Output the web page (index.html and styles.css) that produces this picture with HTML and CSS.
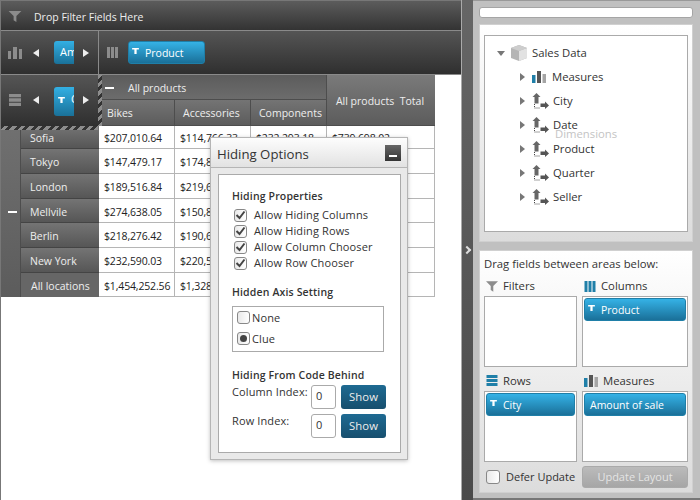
FILE: index.html
```html
<!DOCTYPE html>
<html>
<head>
    <meta charset="utf-8" />
    <title>Hiding Options</title>
    <link rel="stylesheet" href="styles.css">
</head>
<body>
<svg class="defs" width="0" height="0">
    <symbol id="funnel" viewBox="0 0 14 12"><path d="M0 0H14L8.500 5.500V12L5.500 10V5.500Z"/></symbol>
    <symbol id="mini-funnel" viewBox="0 0 9 8"><path d="M0 0H9V2H6V8H3V2H0Z"/></symbol>
    <symbol id="dim" viewBox="0 0 17 16">
        <path d="M4.500 0L8.500 4H6.500V10.500H2.500V4H.5Z" fill="#666"/>
        <path d="M8.500 10.500H13V8.500L17 12.500L13 16V14H8.500Z" fill="#555"/>
        <path d="M2.500 11v4h6" fill="none" stroke="#444" stroke-dasharray="1 1"/>
    </symbol>
</svg>
<div class="app">
    <div class="pivot">
        <div class="filter-bar">
            <svg class="bar-icon"><use href="#funnel"/></svg>
            <span>Drop Filter Fields Here</span>
        </div>
        <div class="axes-row">
            <div class="corner">
                <svg class="zone-icon" viewBox="0 0 14 12"><path d="M0 4h3v8H0zM5 0h4v12H5zM11 2h3v10h-3z" fill="#8c8c8c"/></svg>
                <span class="arrow left"></span>
                <span class="clip-btn short">Am</span>
                <span class="arrow right"></span>
            </div>
            <div class="col-zone">
                <svg class="zone-icon" viewBox="0 0 11 11"><path d="M0 0h3v11H0zM4 0h3v11H4zM8 0h3v11H8z" fill="#8c8c8c"/></svg>
                <span class="field-btn dark-btn"><svg class="mini"><use href="#mini-funnel"/></svg>Product</span>
            </div>
        </div>
        <div class="table">
            <div class="corner corner-tall">
                <svg class="zone-icon" viewBox="0 0 11 11"><path d="M0 0h11v3H0zM0 4h11v3H0zM0 8h11v3H0z" fill="#8c8c8c"/></svg>
                <span class="arrow left"></span>
                <span class="clip-btn tall"><svg class="mini"><use href="#mini-funnel"/></svg>C</span>
                <span class="arrow right"></span>
                <span class="hatch-v"></span>
            </div>
            <div class="head all-products"><span class="dash"></span>All products</div>
            <div class="head total">All products&nbsp; Total</div>
            <div class="head sub">Bikes</div>
            <div class="head sub">Accessories</div>
            <div class="head sub">Components</div>

            <div class="expander"><span class="dash"></span><span class="hatch-h"></span></div>
            <div class="row-head">Sofia</div>
            <div class="cell">$207,010.64</div><div class="cell">$114,766.33</div><div class="cell">$232,293.18</div><div class="cell">$739,698.02</div>
            <div class="row-head">Tokyo</div>
            <div class="cell">$147,479.17</div><div class="cell">$174,812.40</div><div class="cell">$201,340.11</div><div class="cell">$523,631.68</div>
            <div class="row-head">London</div>
            <div class="cell">$189,516.84</div><div class="cell">$219,630.27</div><div class="cell">$198,402.55</div><div class="cell">$607,549.66</div>
            <div class="row-head">Mellvile</div>
            <div class="cell">$274,638.05</div><div class="cell">$150,871.92</div><div class="cell">$210,118.30</div><div class="cell">$635,628.27</div>
            <div class="row-head">Berlin</div>
            <div class="cell">$218,276.42</div><div class="cell">$190,644.18</div><div class="cell">$187,225.09</div><div class="cell">$596,145.69</div>
            <div class="row-head">New York</div>
            <div class="cell">$232,590.03</div><div class="cell">$220,516.75</div><div class="cell">$205,377.62</div><div class="cell">$658,484.40</div>
            <div class="row-head all-loc">All locations</div>
            <div class="cell">$1,454,252.56</div><div class="cell">$1,328,741.12</div><div class="cell">$1,234,756.85</div><div class="cell">$4,017,750.53</div>
        </div>
    </div>

    <div class="splitter"><span class="chevron"></span></div>

    <div class="side">
        <div class="search"></div>
        <div class="panel tree-panel">
            <div class="tree">
                <div class="node root">
                    <span class="tri down"></span>
                    <svg class="cube" viewBox="0 0 16 16"><path d="M8 0L16 3V13L8 16L0 13V3Z" fill="#b5b5b5"/><path d="M8 6L16 3V13L8 16Z" fill="#e2e2e2"/><path d="M0 3L8 0L16 3L8 6Z" fill="#cdcdcd"/></svg>
                    Sales Data
                </div>
                <div class="node">
                    <span class="tri"></span>
                    <svg class="bars" viewBox="0 0 14 12"><path d="M0 4h3.500v8H0z" fill="#1f7fa8"/><path d="M5 0h4v12H5z" fill="#555"/><path d="M10.500 3H14v9h-3.500z" fill="#a5a5a5"/></svg>
                    Measures
                </div>
                <div class="node"><span class="tri"></span><svg class="dim"><use href="#dim"/></svg>City</div>
                <div class="node"><span class="tri"></span><svg class="dim"><use href="#dim"/></svg>Date</div>
                <div class="node"><span class="tri"></span><svg class="dim"><use href="#dim"/></svg>Product</div>
                <div class="node"><span class="tri"></span><svg class="dim"><use href="#dim"/></svg>Quarter</div>
                <div class="node"><span class="tri"></span><svg class="dim"><use href="#dim"/></svg>Seller</div>
                <span class="ghost">Dimensions</span>
            </div>
        </div>
        <div class="panel areas-panel">
            <div class="areas-title">Drag fields between areas below:</div>
            <div class="areas">
                <div class="area">
                    <div class="area-label"><svg class="area-icon gray"><use href="#funnel"/></svg>Filters</div>
                    <div class="drop"></div>
                </div>
                <div class="area">
                    <div class="area-label"><svg class="area-icon" viewBox="0 0 11 11"><path d="M0 0h3v11H0zM4 0h3v11H4zM8 0h3v11H8z" fill="#1f7fa8"/></svg>Columns</div>
                    <div class="drop"><span class="field-btn"><svg class="mini"><use href="#mini-funnel"/></svg>Product</span></div>
                </div>
                <div class="area">
                    <div class="area-label"><svg class="area-icon" viewBox="0 0 11 11"><path d="M0 0h11v3H0zM0 4h11v3H0zM0 8h11v3H0z" fill="#1f7fa8"/></svg>Rows</div>
                    <div class="drop"><span class="field-btn"><svg class="mini"><use href="#mini-funnel"/></svg>City</span></div>
                </div>
                <div class="area">
                    <div class="area-label"><svg class="area-icon wide" viewBox="0 0 14 12"><path d="M0 3h3.500v9H0z" fill="#1f7fa8"/><path d="M5 0h4v12H5z" fill="#555"/><path d="M10.500 2H14v10h-3.500z" fill="#a5a5a5"/></svg>Measures</div>
                    <div class="drop"><span class="field-btn plain">Amount of sale</span></div>
                </div>
            </div>
            <div class="areas-foot">
                <label class="defer"><span class="box big"></span>Defer Update</label>
                <span class="update">Update Layout</span>
            </div>
        </div>
    </div>

    <div class="dialog">
        <div class="dialog-title">
            <span>Hiding Options</span>
            <span class="min-btn"></span>
        </div>
        <div class="dialog-body">
            <div class="group-title first">Hiding Properties</div>
            <div class="check-row"><span class="box"><svg viewBox="0 0 11 10"><path d="M1.500 5L4.500 8L9.500 1.500" fill="none" stroke="#444" stroke-width="2"/></svg></span>Allow Hiding Columns</div>
            <div class="check-row"><span class="box"><svg viewBox="0 0 11 10"><path d="M1.500 5L4.500 8L9.500 1.500" fill="none" stroke="#444" stroke-width="2"/></svg></span>Allow Hiding Rows</div>
            <div class="check-row"><span class="box"><svg viewBox="0 0 11 10"><path d="M1.500 5L4.500 8L9.500 1.500" fill="none" stroke="#444" stroke-width="2"/></svg></span>Allow Column Chooser</div>
            <div class="check-row"><span class="box"><svg viewBox="0 0 11 10"><path d="M1.500 5L4.500 8L9.500 1.500" fill="none" stroke="#444" stroke-width="2"/></svg></span>Allow Row Chooser</div>
            <div class="group-title second">Hidden Axis Setting</div>
            <div class="radio-box">
                <div class="radio-row"><span class="box"></span>None</div>
                <div class="radio-row"><span class="box on"></span>Clue</div>
            </div>
            <div class="group-title third">Hiding From Code Behind</div>
            <div class="index-row"><span class="index-label">Column Index:</span><span class="num">0</span><span class="show">Show</span></div>
            <div class="index-row"><span class="index-label">Row Index:</span><span class="num">0</span><span class="show">Show</span></div>
        </div>
    </div>
</div>
</body>
</html>
```

FILE: styles.css
```css
* {margin: 0;padding: 0;box-sizing: border-box;}
body {font: 10.5px/14px "Open Sans", "Noto Sans", sans-serif;color: #333;background: #fff;overflow: hidden;}
.defs {position: absolute;}
.app {display: flex;position: relative;width: 700px;height: 500px;}

/*pivot*/
.pivot {width: 461px;height: 500px;background: #fff;border-left: 1px solid #777;}
.filter-bar {height: 31px;display: flex;align-items: center;padding: 1px 0 0 7px;gap: 12px;color: #eee;background: linear-gradient(#5c5c5c, #333);border-top: 1px solid #777;border-bottom: 1px solid #8a8a8a;}
.filter-bar span {padding-top: 2px;}
.bar-icon {width: 14px;height: 11px;fill: #8c8c8c;}
.axes-row {display: flex;height: 44px;background: linear-gradient(#555, #2f2f2f);border-bottom: 1px solid #8a8a8a;}
.corner {width: 98px;display: flex;align-items: center;padding-left: 7px;border-right: 1px solid #8a8a8a;position: relative;}
.corner-tall {grid-column: 1 / 3;grid-row: 1 / 3;width: auto;background: linear-gradient(#555, #2f2f2f);padding-bottom: 1px;}
.zone-icon {width: 14px;height: 12px;margin-right: 11px;}
.arrow {width: 0;height: 0;border-top: 4px solid transparent;border-bottom: 4px solid transparent;}
.arrow.left {border-right: 6px solid #eee;margin-right: 15px;}
.arrow.right {border-left: 6px solid #eee;margin-left: 9px;}
.clip-btn {width: 20px;display: block;overflow: hidden;white-space: nowrap;color: #fff;background: linear-gradient(#33b0e4, #1a7199);border-radius: 3px 0 0 3px;}
.clip-btn.short {height: 23px;line-height: 22px;padding-left: 6px;font-size: 11px;}
.clip-btn.tall {height: 29px;line-height: 24px;padding-left: 4px;margin-top: 2px;}
.col-zone {flex: 1;display: flex;align-items: center;padding-left: 8px;}
.col-zone .zone-icon {width: 11px;height: 11px;margin-right: 10px;}
.col-zone .field-btn {width: 77px;}
.field-btn {display: flex;align-items: center;height: 23px;width: 100%;color: #fff;background: linear-gradient(#35b2e6, #1a7099);border: 1px solid #1f7fa8;border-radius: 3px;padding-left: 3px;}
.field-btn.plain {padding-left: 5px;}
.mini {width: 7px;height: 6px;fill: #fff;margin: -4px 6px 0 0;flex: none;}

.table {display: grid;width: 434px;grid-template-columns: 20px 78px 76px 76px 76px 108px;grid-template-rows: 25px 26px 23px 25px 25px 24px 25px 25px 24px;}
.head {color: #eee;display: flex;align-items: center;padding-left: 8px;background: linear-gradient(#747474, #5c5c5c);border-right: 1px solid #4d4d4d;border-bottom: 1px solid #4d4d4d;}
.all-products {grid-column: 3 / 6;background: linear-gradient(#5c5c5c, #6c6c6c);padding: 2px 0 0 6px;}
.all-products .dash {margin-right: 14px;}
.total {grid-column: 6;grid-row: 1 / 3;border-right: none;background: linear-gradient(#7a7a7a, #5c5c5c);justify-content: center;padding: 2px 2px 0 0;}
.dash {display: block;width: 9px;height: 2px;background: #fff;}
.expander {grid-column: 1;grid-row: 3 / 10;display: flex;align-items: center;justify-content: center;padding-left: 3px;background: linear-gradient(#707070, #5c5c5c);position: relative;border-right: 1px solid #4d4d4d;}
.row-head {color: #eee;display: flex;align-items: center;padding: 2px 0 0 9px;background: linear-gradient(#747474, #565656);border-bottom: 1px solid #444;}
.row-head.all-loc {margin-left: -1px;padding-left: 11px;background: #666;border-bottom: none;}
.cell {color: #222;display: flex;align-items: center;padding: 2px 0 0 5px;white-space: nowrap;overflow: hidden;letter-spacing: -.15px;border-right: 1px solid #b5b5b5;border-bottom: 1px solid #b5b5b5;}
.hatch-v {position: absolute;top: 0;right: -4px;width: 4px;height: 100%;background: repeating-linear-gradient(-45deg, #8c8c8c 0 3px, #333 3px 6px);}
.hatch-h {position: absolute;top: 0;left: 0;width: 97px;height: 4px;background: repeating-linear-gradient(-45deg, #8c8c8c 0 3px, #333 3px 6px);}

/*splitter*/
.splitter {width: 12px;background: linear-gradient(#666, #4a4a4a);border-left: 1px solid #aaa;display: flex;align-items: center;justify-content: center;}
.chevron {width: 6px;height: 6px;border-top: 2px solid #ddd;border-right: 2px solid #ddd;transform: rotate(45deg);margin-left: -2px;}

/*side*/
.side {width: 227px;background: #c0c0c0;padding: 6px 7px 5px 6px;display: flex;flex-direction: column;border-bottom: 2px solid #777;border-top: 1px solid #999;}
.search {height: 11px;margin-bottom: 6px;background: #fff;border: 1px solid #a5a5a5;border-radius: 3px;flex: none;}
.panel {background: linear-gradient(#fff, #dcdcdc);border: 1px solid #d0d0d0;flex: none;}
.tree-panel {height: 218px;padding: 10px 4px 9px;margin-bottom: 8px;}
.tree {height: 100%;background: #fff;border: 1px solid #aaa;padding-top: 5px;position: relative;}
.node {display: flex;align-items: center;height: 24px;padding-left: 35px;font-size: 11.3px;color: #333;}
.node.root {padding-left: 12px;}
.tri {width: 0;height: 0;margin-right: 7px;border-top: 4px solid transparent;border-bottom: 4px solid transparent;border-left: 5px solid #777;}
.tri.down {border-top: 5px solid #777;border-left: 4px solid transparent;border-right: 4px solid transparent;border-bottom: none;margin-right: 6px;}
.cube {width: 16px;height: 16px;margin-right: 5px;}
.bars {width: 14px;height: 12px;margin-right: 6px;}
.dim {width: 17px;height: 16px;margin-right: 4px;}
.ghost {position: absolute;left: 70px;top: 91px;color: #c4c4c4;font-size: 11.3px;}

.areas-panel {height: 243px;padding: 6px 4px 0;}
.areas-title {height: 16px;font-size: 11.3px;color: #333;}
.areas {display: grid;grid-template-columns: 93px 106px;column-gap: 5px;}
.area-label {display: flex;align-items: center;height: 23px;padding: 3px 0 0 2px;font-size: 11.3px;gap: 5px;}
.area-icon {width: 12px;height: 11px;flex: none;}
.area-icon.wide {width: 14px;height: 12px;}
.area-icon.gray {fill: #8c8c8c;}
.drop {height: 71px;background: #fff;border: 1px solid #aaa;padding: 1px;}
.area:nth-child(n+3) .area-label {height: 24px;}
.areas-foot {display: flex;align-items: center;justify-content: space-between;margin-top: 4px;}
.defer {display: flex;align-items: center;gap: 6px;padding-left: 2px;font-size: 11px;}
.update {width: 106px;height: 22px;line-height: 20px;text-align: center;color: #e4e4e4;background: linear-gradient(#bbb, #a6a6a6);border: 1px solid #aaa;border-radius: 3px;font-size: 11px;}

/*checkbox and radio*/
.box {display: block;flex: none;width: 13px;height: 13px;background: linear-gradient(90deg, #e9e9e9, #fff);border: 1px solid #888;border-radius: 3px;}
.box.big {width: 14px;height: 14px;}
.box svg {display: block;width: 11px;height: 10px;}
.box.on::after {content: "";display: block;width: 7px;height: 7px;margin: 2px;border-radius: 50%;background: #444;}

/*dialog*/
.dialog {position: absolute;left: 210px;top: 137px;width: 198px;height: 323px;background: #e9e9e9;border: 1px solid #b5b5b5;box-shadow: 0 1px 4px rgba(0,0,0,.25);padding: 0 6px 6px 7px;display: flex;flex-direction: column;font-size: 11px;}
.dialog-title {height: 30px;margin: 0 -6px 6px -7px;padding: 0 6px 0 6px;display: flex;align-items: center;justify-content: space-between;font-size: 13.2px;color: #333;background: linear-gradient(#fdfdfd, #e2e2e2);border-bottom: 1px solid #b5b5b5;}
.dialog-title span:first-child {padding-top: 2px;}
.min-btn {width: 16px;height: 16px;background: linear-gradient(#666, #333);display: flex;align-items: flex-end;justify-content: center;padding-bottom: 4px;}
.min-btn::after {content: "";width: 8px;height: 2px;background: #fff;}
.dialog-body {flex: 1;background: #fff;border: 1px solid #aaa;padding: 14px 13px 0;letter-spacing: .12px;}
.group-title {font-weight: 600;height: 16px;font-size: 10.5px;color: #333;letter-spacing: .15px;}
.group-title.first {margin-bottom: 2px;}
.group-title.second {margin-top: 14px;}
.group-title.third {margin: 16px 0 1px;}
.check-row {display: flex;align-items: center;gap: 7px;height: 16px;padding-left: 2px;}
.radio-box {height: 46px;margin: 5px 3px 0 0;padding: 0 0 0 4px;border: 1px solid #aaa;}
.radio-row {display: flex;align-items: center;gap: 2px;height: 21px;}
.index-row {display: flex;align-items: flex-start;height: 29px;}
.index-label {width: 79px;white-space: nowrap;}
.num {width: 25px;height: 24px;padding: 3px 0 0 4px;border: 1px solid #aaa;border-radius: 3px;}
.show {width: 45px;height: 24px;margin-left: 5px;line-height: 23px;text-align: center;color: #eee;background: linear-gradient(#1e6a92, #174f6e);border-radius: 3px;font-size: 11.3px;}
```
